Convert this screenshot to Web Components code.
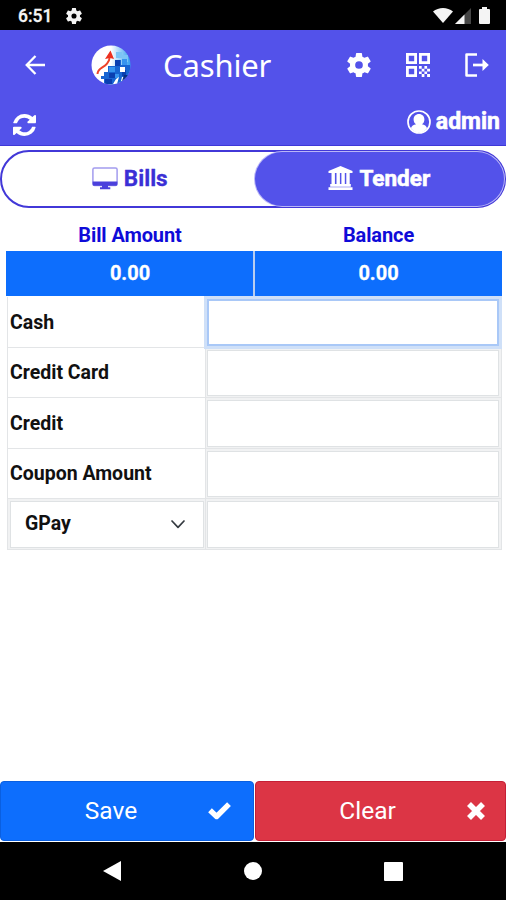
<!DOCTYPE html>
<html lang="en">
<head>
<meta charset="utf-8">
<title>Cashier</title>
<style>
html,body{margin:0;height:100%;background:#fff;overflow:hidden}
body{font-family:Roboto,"Liberation Sans",sans-serif}
</style>
</head>
<body>
<cashier-app></cashier-app>
<script>
const define = (name, html, setup) => customElements.define(name, class extends HTMLElement {
  constructor() {
    super();
    this.attachShadow({ mode: 'open' }).innerHTML = html;
  }
  connectedCallback() { if (setup) setup(this, this.shadowRoot); }
});

const gear = 'M19.4 13a7.500 7.500 0 0 0 0-2l2.100-1.650a.5.5 0 0 0 .12-.64l-2-3.460a.5.5 0 0 0-.61-.22l-2.490 1a7.300 7.300 0 0 0-1.690-.98l-.38-2.650A.49.49 0 0 0 14 2h-4a.49.49 0 0 0-.49.42l-.38 2.650c-.61.25-1.170.59-1.690.98l-2.490-1a.5.5 0 0 0-.61.22l-2 3.460a.5.5 0 0 0 .12.64L4.570 11a7.900 7.900 0 0 0 0 2l-2.110 1.650a.5.5 0 0 0-.12.64l2 3.460c.12.22.39.3.61.22l2.490-1c.52.4 1.080.73 1.690.98l.38 2.650c.03.24.24.42.49.42h4c.25 0 .46-.18.49-.42l.38-2.650c.61-.25 1.170-.59 1.690-.98l2.490 1c.23.09.49 0 .61-.22l2-3.460a.5.5 0 0 0-.12-.64L19.400 13zM12 15.200a3.200 3.200 0 1 1 0-6.400 3.200 3.200 0 0 1 0 6.400z';
const icons = {
  gear: ['2 2 20 20', `<path fill="currentColor" fill-rule="evenodd" d="${gear}"/>`],
  wifi: ['0 0 20 15', '<path fill="currentColor" d="M10 15 0 3.600C5.500-1.200 14.500-1.200 20 3.600z"/>'],
  signal: ['0 0 16 16', '<path fill="#454545" d="M16 0v16H0z"/><path fill="currentColor" d="M9.500 6.500V16H0z"/>'],
  battery: ['0 0 11 17', '<path fill="currentColor" d="M3 0h5v2h2q1 0 1 1v13q0 1-1 1H1q-1 0-1-1V3q0-1 1-1h2z"/>'],
  back: ['0 0 20 20', '<path fill="none" stroke="currentColor" stroke-width="2.300" d="M20 10H2M10.500 1 1.700 10l8.800 9"/>'],
  qr: ['0 0 24 24', '<g fill="none" stroke="currentColor" stroke-width="2.800"><path d="M1.400 1.400h8.200v8.200H1.400zM14.400 1.400h8.200v8.200h-8.200zM1.400 14.400h8.200v8.200H1.400z"/></g><path fill="currentColor" d="M13 13h2.700v2.700H13zM15.700 15.700h2.700v2.700h-2.700zM18.400 13h2.700v2.700h-2.700zM21.100 15.700H24v2.700h-2.900zM13 18.400h2.700v2.700H13zM18.400 18.400h2.700v2.700h-2.700zM15.700 21.100h2.700V24h-2.700zM21.100 21.100H24V24h-2.900z"/>'],
  logout: ['0 0 24 24', '<path fill="none" stroke="currentColor" stroke-width="2.500" stroke-linejoin="round" d="M12 1.500H1.500v21H12"/><path fill="none" stroke="currentColor" stroke-width="2.700" d="M8 12h13"/><path fill="currentColor" d="m17.500 6 6.300 6-6.300 6z"/>'],
  sync: ['0 0 1536 1536', '<path fill="currentColor" d="M1511 928q0 5-1 7-64 268-268 434.500T764 1536q-146 0-282.500-55T238 1324l-129 129q-19 19-45 19t-45-19-19-45V960q0-26 19-45t45-19h448q26 0 45 19t19 45-19 45l-137 137q71 66 161 102t187 36q134 0 250-65t186-179q11-17 53-117 8-23 30-23h192q13 0 22.500 9.500t9.500 22.500zm25-800v448q0 26-19 45t-45 19h-448q-26 0-45-19t-19-45 19-45l138-138Q969 256 768 256q-134 0-250 65T332 500q-11 17-53 117-8 23-30 23H50q-13 0-22.500-9.500T18 608v-7q65-268 270-434.500T768 0q146 0 284 55.500T1297 212l130-129q19-19 45-19t45 19 19 45z"/>'],
  user: ['0 0 24 24', '<circle cx="12" cy="12" r="11" fill="none" stroke="currentColor" stroke-width="1.700"/><path fill="currentColor" d="M12 4c3.200 0 5.400 2.300 5.400 5.400 0 2.200-1 4-2.500 4.900 2.700.3 4.500 1.700 5.200 3.900A10.300 10.300 0 0 1 12 22.500 10.300 10.300 0 0 1 3.900 18.200c.7-2.200 2.500-3.600 5.200-3.900-1.500-.9-2.500-2.700-2.500-4.900C6.600 6.300 8.800 4 12 4z"/>'],
  monitor: ['0 0 26 23', '<rect x=".9" y=".9" width="24.200" height="17.500" rx="1.600" fill="#fff" stroke="#a39cee" stroke-width="1.500"/><path fill="#4b40dc" d="M.6 14.500h24.800v2.800q0 1.500-1.500 1.500H2.100q-1.500 0-1.500-1.500zM10 18.800h6v1.500h2.300v2H8v-2h2z"/>'],
  bank: ['0 0 25 24', '<path fill="currentColor" d="M12.500 0 24.500 5v2H.5V5zM3.500 7h3.400v11H3.500zM8.500 7h3.400v11H8.500zM13.400 7h3.400v11h-3.400zM18.300 7h3.400v11h-3.400zM2.200 18h20.600v2.700H2.200zM.5 21.200h24V24H.5z"/>'],
  chevron: ['0 0 14 9', '<path fill="none" stroke="#343a40" stroke-width="1.700" stroke-linecap="round" stroke-linejoin="round" d="m1 1 6 6.300L13 1"/>'],
  check: ['0 0 23 18', '<path fill="none" stroke="currentColor" stroke-width="5.400" stroke-linejoin="round" d="m2 8.300 6.600 6.200L21 2.200"/>'],
  cross: ['0 0 18 18', '<path fill="none" stroke="currentColor" stroke-width="5.600" d="m2 2 14 14M16 2 2 16"/>'],
  logo: ['0 0 40 40', '<defs><clipPath id="c"><circle cx="20" cy="20" r="19.500"/></clipPath><linearGradient id="g" x1="0" x2="1"><stop offset=".5" stop-color="#fff"/><stop offset="1" stop-color="#2b9cf0"/></linearGradient></defs><g clip-path="url(#c)"><path fill="url(#g)" d="M0 0h40v40H0z"/><path fill="#7cc4f5" d="M25 7h6v6h-6zM31 10h6v7h-6z"/><path fill="#1765d2" d="M24 15h6v5h9v20H13v-6h-3v-3h3v-4h4v-6h7z"/><path fill="#0a3fb0" d="M24 15h5v6h-5zM18 28h6v5h-6zM14 34h7v5h-7zM31 25h4v6h-4z"/><path fill="#3694ef" d="M18 22h6v5h-6zM31 14h5v6h-5zM24 29h4v4h-4z"/><path fill="#fff" d="M29 22h5v5h-5zM25 34l3-2-2 7h-4zM31 32h4l-3 4h-2z"/><path fill="#072d85" d="M33 30h5l-4 6h-3z"/><path fill="none" stroke="#ed432a" stroke-width="2" d="M6.500 29c0-8 11-5 12.500-18"/><path fill="#ed301f" d="M19.500 5.500 23 14l-4-1-5 1z"/></g>'],
  navback: ['0 0 18 20', '<path fill="#fff" d="M18 0v20L0 10z"/>'],
  navhome: ['0 0 18 18', '<circle cx="9" cy="9" r="9" fill="#fff"/>'],
  navrecent: ['0 0 19 19', '<rect width="19" height="19" rx="1" fill="#fff"/>']
};
define('ui-icon', '<style>:host{display:block;flex:none}span{display:contents}svg{display:block;width:100%;height:100%}</style><span></span>', (el, root) => {
  const [box, art] = icons[el.getAttribute('name')];
  el.style.width = el.getAttribute('w') + 'px';
  el.style.height = el.getAttribute('h') + 'px';
  root.querySelector('span').innerHTML = `<svg viewBox="${box}" preserveAspectRatio="none">${art}</svg>`;
});

define('status-bar', `<style>
:host{display:flex;align-items:center;height:30px;background:#000;color:#f4f4f4;padding:1px 16px 0 18px;box-sizing:border-box;font:500 17.500px/28px Roboto,sans-serif}
.time{width:48px;-webkit-text-stroke:.3px #f4f4f4}.sp{flex:1}
.r{display:flex;gap:3px;align-items:center}
</style><span class="time">6:51</span><ui-icon name="gear" w="16" h="16"></ui-icon><span class="sp"></span>
<div class="r"><ui-icon name="wifi" w="20" h="15" style="margin-right:-1px"></ui-icon><ui-icon name="signal" w="16" h="16"></ui-icon><ui-icon name="battery" w="11" h="17" style="margin-left:5px"></ui-icon></div>`);

define('app-header', `<style>
:host{display:block;height:116px;background:#5352ea;color:#fff;box-sizing:border-box;border-bottom:1px solid #3f38d8}
.top{display:flex;align-items:center;height:70px;padding:0 17px 0 25px}
.title{font:400 31px/40px "Noto Sans","Open Sans",sans-serif;letter-spacing:-.15px;margin-left:32px;width:184px;white-space:nowrap}
.sub{display:flex;align-items:center;justify-content:space-between;height:45px;padding:0 6px 0 13px}
.user{display:flex;align-items:center;gap:5px;font:700 23px/30px Roboto,sans-serif;-webkit-text-stroke:.6px #fff;margin-top:-1px}
</style>
<div class="top"><ui-icon name="back" w="20" h="20"></ui-icon><ui-icon name="logo" w="40" h="40" style="margin-left:46px"></ui-icon><span class="title">Cashier</span>
<ui-icon name="gear" w="24" h="24"></ui-icon><ui-icon name="qr" w="24" h="24" style="margin-left:35px"></ui-icon><ui-icon name="logout" w="24" h="24" style="margin-left:35px"></ui-icon></div>
<div class="sub"><ui-icon name="sync" w="23" h="22" style="margin-top:5px"></ui-icon><div class="user"><ui-icon name="user" w="24" h="24"></ui-icon><span>admin</span></div></div>`);

define('tab-pill', `<style>
:host{flex:1;display:flex;align-items:center;justify-content:center;gap:6px;font:700 22.500px/30px Roboto,sans-serif;-webkit-text-stroke:.3px currentColor;color:#3b2fd6;border-radius:29px;box-sizing:border-box;padding:0 0 2px}
:host([active]){background:#5352ea;color:#fff;box-shadow:0 0 0 1px #b9b6f7;padding:0 0 2px;-webkit-text-stroke-width:.6px}
</style><slot name="icon"></slot><span><slot></slot></span>`);
define('tab-bar', `<style>
:host{display:flex;height:58px;margin:4px 0 0;border:2px solid #3126d3;border-color:#4238d8;border-radius:29px;box-sizing:border-box;padding:0 0 0 3px}
</style><slot></slot>`);

define('amount-card', `<style>
:host{display:block;text-align:center;font:700 20px/28px Roboto,sans-serif;color:#0f0bd8}
.v{height:45px;line-height:44px;background:#0d6efd;color:#fff;-webkit-text-stroke:.3px #fff}
.l{height:30px}
.l,.v{text-indent:1px}
.l{letter-spacing:-.1px}
</style><div class="l"><slot></slot></div><div class="v">0.00</div>`);

define('pay-row', `<style>
:host{display:grid;grid-template-columns:198px 1fr;height:50.500px;box-sizing:border-box;border-bottom:1px solid #e3e5e7;font:700 19.500px/24px Roboto,sans-serif;color:#111}
.l{display:flex;align-items:center;padding:2px 0 0 2px;border-right:1px solid #e3e5e7}
.f{padding:2px 2px 1px 1px;background:#f1f2f3}
input{display:block;width:100%;height:100%;box-sizing:border-box;border:1px solid #dfe2e4;background:#fff;outline:none;padding:0 10px;font:inherit}
:host([focused]) input{border:2px solid #a9c8f7;box-shadow:0 0 0 3px #cfe0f8;position:relative}
:host([select]) .l{padding:2px 1px 1px 2px;background:#f1f2f3}
.s{display:contents}
:host([select]) .s{display:flex;flex:1;align-items:center;justify-content:space-between;height:100%;box-sizing:border-box;border:1px solid #dfe2e4;background:#fff;padding:0 18px 0 14px}
ui-icon{display:none}
:host([select]) ui-icon{display:block}
</style><div class="l"><div class="s"><slot></slot><ui-icon name="chevron" w="14" h="9"></ui-icon></div></div><div class="f"><input></div>`);

define('action-button', `<style>
:host{display:flex;align-items:center;flex:1;height:60px;border-radius:4px;color:#fff;font:400 24.500px/30px Roboto,sans-serif;box-sizing:border-box;background:#0d6efd;border:1px solid #0a5fe0;padding:0 22px 0 13px}
:host([danger]){background:#dc3545;border-color:#c51f36;padding:0 20px 0 12px}
span{flex:1;text-align:center;}
</style><span><slot></slot></span><slot name="icon"></slot>`);

define('nav-bar', `<style>
:host{display:grid;grid-template-columns:1fr auto 1fr;align-items:center;height:58px;background:#000;padding:0 103px}
ui-icon:last-of-type{justify-self:end}
</style><ui-icon name="navback" w="18" h="20"></ui-icon><ui-icon name="navhome" w="18" h="18"></ui-icon><ui-icon name="navrecent" w="19" h="19"></ui-icon>`);

define('cashier-app', `<style>
:host{display:flex;flex-direction:column;width:506px;height:900px;background:#fff}
.amounts{display:grid;grid-template-columns:247px 247px;gap:1.500px;margin:13px 4px 0 6px;background:linear-gradient(#b8cdf0,#b8cdf0) 246px 30px/3px 45px no-repeat}
.rows{margin:1px 4px 0 7px;border:1px solid #e3e5e7;border-width:0 1px 0}
.actions{display:flex;gap:1px;margin-top:auto;padding-bottom:1px}
</style>
<status-bar></status-bar><app-header></app-header>
<tab-bar><tab-pill><ui-icon slot="icon" name="monitor" w="26" h="23"></ui-icon>Bills</tab-pill><tab-pill active><ui-icon slot="icon" name="bank" w="25" h="24"></ui-icon>Tender</tab-pill></tab-bar>
<div class="amounts"><amount-card>Bill Amount</amount-card><amount-card>Balance</amount-card></div>
<div class="rows"><pay-row focused>Cash</pay-row><pay-row>Credit Card</pay-row><pay-row>Credit</pay-row><pay-row>Coupon Amount</pay-row><pay-row select>GPay</pay-row></div>
<div class="actions"><action-button>Save<ui-icon slot="icon" name="check" w="23" h="18"></ui-icon></action-button><action-button danger>Clear<ui-icon slot="icon" name="cross" w="18" h="18"></ui-icon></action-button></div>
<nav-bar></nav-bar>`);
</script>
</body>
</html>
